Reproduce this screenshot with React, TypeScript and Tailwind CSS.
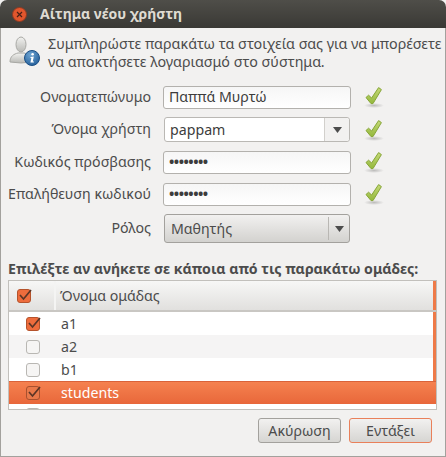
const font = { fontFamily: '"Noto Sans", "Open Sans", sans-serif' }

function Tick() {
  return (
    <svg width="22" height="24" viewBox="0 0 22 24" className="shrink-0">
      <defs>
        <linearGradient id="tickFill" x1="0" y1="0" x2="0" y2="1">
          <stop offset="0" stopColor="#c6da78" />
          <stop offset="1" stopColor="#93b83c" />
        </linearGradient>
        <radialGradient id="tickShadow">
          <stop offset="0" stopColor="#000" stopOpacity="0.22" />
          <stop offset="1" stopColor="#000" stopOpacity="0" />
        </radialGradient>
      </defs>
      <ellipse cx="11" cy="20.5" rx="10" ry="2.5" fill="url(#tickShadow)" />
      <path d="M3 12.5 L5.6 10.2 L8.6 13 L15.6 2.6 L18.4 4.6 L10 18.6 L8 18.6 Z" fill="url(#tickFill)" stroke="#86a536" strokeWidth="1" strokeLinejoin="round" />
    </svg>
  )
}

function UserInfoIcon() {
  return (
    <svg width="32" height="32" viewBox="0 0 32 32" className="shrink-0">
      <defs>
        <linearGradient id="person" x1="0" y1="0" x2="0" y2="1">
          <stop offset="0" stopColor="#f2f2f0" />
          <stop offset="1" stopColor="#b9b9b5" />
        </linearGradient>
        <radialGradient id="infoDisc" cx="0.4" cy="0.3" r="0.8">
          <stop offset="0" stopColor="#6ea4d2" />
          <stop offset="1" stopColor="#1f5a96" />
        </radialGradient>
      </defs>
      <ellipse cx="12" cy="9.5" rx="5" ry="7.5" fill="url(#person)" stroke="#a9a9a5" />
      <path d="M1 27 C1 21 5 19 9 18 L15 18 C19 19 23 21 23 27 Q12 29 1 27 Z" fill="url(#person)" stroke="#a9a9a5" />
      <circle cx="23" cy="23" r="7.5" fill="url(#infoDisc)" stroke="#1b4f86" />
      <circle cx="23.6" cy="19.2" r="1.3" fill="#fff" />
      <path d="M21.6 22 L24.8 21.6 L23.8 26.4 L25 26.4 L24.8 27.4 L21.4 27.4 L22.4 23 L21.4 23 Z" fill="#fff" />
    </svg>
  )
}

function Arrow() {
  return (
    <svg width="9" height="6" viewBox="0 0 9 6">
      <path d="M0 0 H9 L4.5 6 Z" fill="#4c4c4c" />
    </svg>
  )
}

function Box({ checked, onOrange }: { checked?: boolean; onOrange?: boolean }) {
  return (
    <span
      className={
        'relative block w-[14px] h-[14px] rounded-[3px] border ' +
        (checked
          ? onOrange
            ? 'border-[#a8512f] bg-[#e9794a]'
            : 'border-[#b5532c] bg-[#ee6c3c]'
          : 'border-[#b9b7b3] bg-[#f6f5f4]')
      }
    >
      {checked && (
        <svg width="16" height="14" viewBox="0 0 16 14" className="absolute left-[-1px] top-[-2px]">
          <path d="M3 7 L6.5 11 L14 2" fill="none" stroke="#5b3526" strokeWidth="1.7" />
        </svg>
      )}
    </span>
  )
}

function Row({ label, children }: { label: string; children: React.ReactNode }) {
  return (
    <div className="flex items-center">
      <div className="w-[150px] text-right text-[14.2px] leading-none text-[#4c4c4c] whitespace-nowrap">{label}</div>
      <div className="ml-[12px] w-[188px]">{children}</div>
    </div>
  )
}

function TextInput({ value, password }: { value: string; password?: boolean }) {
  return (
    <div
      className={
        'h-[23px] rounded-[3px] border border-[#b3b1ad] bg-gradient-to-b from-[#f6f6f6] to-white pl-[5px] flex items-center text-[14.2px] text-[#3c3c3c] ' +
        (password ? 'tracking-[-0.5px] font-bold' : '')
      }
    >
      {value}
    </div>
  )
}

const groups = [
  { name: 'a1', checked: true, bg: 'bg-white' },
  { name: 'a2', checked: false, bg: 'bg-[#f5f4f4]' },
  { name: 'b1', checked: false, bg: 'bg-white' },
]

export default function App() {
  return (
    <div className="w-[446px] h-[457px] flex flex-col bg-[#f2f1f0] overflow-hidden text-[#3c3c3c]" style={font}>
      {/* Title bar */}
      <div className="h-[28px] shrink-0 rounded-t-[7px] bg-gradient-to-b from-[#4f4e49] to-[#3a3935] flex items-center pl-[12px] gap-[13px]">
        <span className="w-[15px] h-[15px] rounded-full bg-[#e2562d] border border-[#8c3a22] flex items-center justify-center">
          <svg width="7" height="7" viewBox="0 0 7 7">
            <path d="M1 1 L6 6 M6 1 L1 6" stroke="#4a2016" strokeWidth="1.2" />
          </svg>
        </span>
        <span className="text-[14px] font-bold text-[#dfdbd2] leading-none">Αίτημα νέου χρήστη</span>
      </div>

      <div className="flex-1 flex flex-col border-x border-b border-[#a3a19d]">
        {/* Intro */}
        <div className="flex pl-[8px] pt-[7px] gap-[7px]">
          <UserInfoIcon />
          <p className="text-[14.3px] leading-[18px] text-[#4c4c4c] whitespace-nowrap">
            Συμπληρώστε παρακάτω τα στοιχεία σας για να μπορέσετε
            <br />
            να αποκτήσετε λογαριασμό στο σύστημα.
          </p>
        </div>

        {/* Form */}
        <div className="mt-[14px] flex flex-col gap-[8px]">
          <div className="flex items-center">
            <Row label="Ονοματεπώνυμο"><TextInput value="Παππά Μυρτώ" /></Row>
            <div className="ml-[12px]"><Tick /></div>
          </div>
          <div className="flex items-center">
            <Row label="Όνομα χρήστη">
              <div className="h-[25px] ml-px w-[186px] rounded-[3px] border border-[#bab8b4] bg-white flex">
                <div className="flex-1 pl-[5px] flex items-center text-[14.2px]">pappam</div>
                <div className="w-[25px] border-l border-[#d2d0cc] bg-[#f2f1f0] flex items-center justify-center rounded-r-[3px]">
                  <Arrow />
                </div>
              </div>
            </Row>
            <div className="ml-[12px]"><Tick /></div>
          </div>
          <div className="flex items-center">
            <Row label="Κωδικός πρόσβασης"><TextInput value="••••••••" password /></Row>
            <div className="ml-[12px]"><Tick /></div>
          </div>
          <div className="flex items-center">
            <Row label="Επαλήθευση κωδικού"><TextInput value="••••••••" password /></Row>
            <div className="ml-[12px]"><Tick /></div>
          </div>
          <div className="flex items-center">
            <Row label="Ρόλος">
              <div className="h-[29px] ml-px w-[186px] rounded-[3px] border border-[#a3a19d] bg-gradient-to-b from-[#f2f1f0] to-[#d3d2cf] flex items-center text-[14.2px] text-[#4c4c4c]">
                <span className="flex-1 pl-[6px]">Μαθητής</span>
                <span className="w-px h-[23px] bg-[#b9b7b3]" />
                <span className="w-[20px] flex justify-center"><Arrow /></span>
              </div>
            </Row>
          </div>
        </div>

        {/* Groups */}
        <p className="mt-[17px] ml-[7px] text-[14.14px] leading-[18px] font-bold text-[#4c4c4c] whitespace-nowrap">
          Επιλέξτε αν ανήκετε σε κάποια από τις παρακάτω ομάδες:
        </p>
        <div className="mt-[2px] ml-[7px] w-[429px] h-[130px] border border-[#c2c0bc] bg-white flex flex-col overflow-hidden">
          <div className="h-[31px] shrink-0 flex bg-gradient-to-b from-[#f7f7f6] to-[#e1e0de] border-b-2 border-[#c9c7c3]">
            <div className="w-[47px] border-r-2 border-[#f4f4f3] flex items-center pl-[8px]">
              <Box checked />
            </div>
            <div className="flex-1 pl-[4px] flex items-center text-[14.2px] text-[#4c4c4c]">Όνομα ομάδας</div>
            <div className="w-[3px] -mt-px bg-[#ee7a48]" />
          </div>
          {groups.map(g => (
            <div key={g.name} className={'h-[23px] shrink-0 flex items-center ' + g.bg}>
              <div className="w-[52px] pl-[17px]"><Box checked={g.checked} /></div>
              <span className="text-[14.2px] text-[#4c4c4c]">{g.name}</span>
              <div className="ml-auto w-[3px] h-full bg-[#ee7a48]" />
            </div>
          ))}
          <div className="h-[23px] shrink-0 flex items-center bg-gradient-to-b from-[#f5814f] to-[#e8673a] border-t border-[#d9623a]">
            <div className="w-[52px] pl-[17px]"><Box checked onOrange /></div>
            <span className="text-[14.2px] text-white">students</span>
          </div>
          <div className="pl-[17px] pt-[4px]"><span className="block w-[14px] h-[4px] rounded-t-[3px] border border-[#b9b7b3]" /></div>
        </div>

        {/* Actions */}
        <div className="mt-[8px] mr-[13px] flex justify-end gap-[8px]">
          <button className="w-[83px] h-[25px] rounded-[3px] border border-[#a3a19d] bg-gradient-to-b from-[#f2f1f0] to-[#d6d5d2] text-[14.2px] text-[#4c4c4c]">Ακύρωση</button>
          <button className="w-[83px] h-[25px] rounded-[3px] border border-[#e9805a] bg-gradient-to-b from-[#f2f1f0] to-[#d6d5d2] text-[14.2px] text-[#4c4c4c]">Εντάξει</button>
        </div>
      </div>
    </div>
  )
}
